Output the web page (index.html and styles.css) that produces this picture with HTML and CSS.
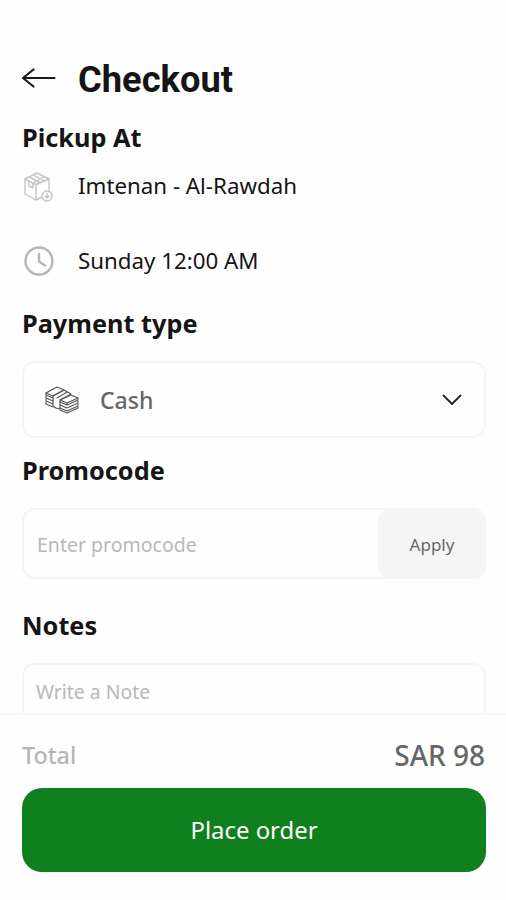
FILE: index.html
```
<!DOCTYPE html>
<html lang="en">
<head>
    <meta charset="UTF-8">
    <meta name="viewport" content="width=device-width, initial-scale=1.0">
    <title>Checkout</title>
    <link rel="stylesheet" href="styles.css">
</head>
<body>
    <main class="content">
        <header class="header">
            <svg class="back-icon" width="34" height="24" viewBox="0 0 34 24">
                <path d="M32.500 12H1M11.500 3.500L1 12l10.500 8.500"/>
            </svg>
            <h1>Checkout</h1>
        </header>

        <!-- Pickup -->
        <h2>Pickup At</h2>
        <div class="info-row">
            <svg class="info-icon box-icon" width="32" height="36" viewBox="0 -4 32 36">
                <path d="M2 8L14 2l12 6v11M2 8v15l11 6 6-3M2 8l11 5.500L26 8M13 13.500V29M6 6l11 5.500M10 4l11 6M6 10v5l4 2v-5l11-6"/>
                <circle cx="24" cy="25" r="5"/>
                <path d="M24 22.500v3M22 25l2 2 2-2"/>
            </svg>
            <span>Imtenan - Al-Rawdah</span>
        </div>
        <div class="info-row time-row">
            <svg class="info-icon clock-icon" width="32" height="34" viewBox="0 -2 32 34">
                <circle cx="16" cy="16" r="13.500"/>
                <path d="M16 9v7.500l6 4"/>
            </svg>
            <span>Sunday 12:00 AM</span>
        </div>

        <!-- Payment -->
        <h2>Payment type</h2>
        <div class="select-box">
            <svg class="cash-icon" width="34" height="30" viewBox="0 0 34 30">
                <path d="M1 8l11-6 7 3L8 11zM15 15l11-5 7 3-11 5z"/>
                <path d="M8 11l11-6 7 4-11 6v9l-4-1-3-2zM12 13l10-6"/>
                <path d="M1 8v2l7 3M1 11v2l7 3M1 14v2l7 3M1 17v2l7 3"/>
                <path d="M33 13v2l-11 5-7-3M33 16v2l-11 5-7-3M33 19v2l-11 5-7-3M33 22v1l-11 5-7-3M22 18v2"/>
            </svg>
            <span class="select-label">Cash</span>
            <svg class="chevron-icon" width="20" height="12" viewBox="0 0 20 12">
                <path d="M1.500 1.500l8.500 8.500 8.500-8.500"/>
            </svg>
        </div>

        <!-- Promocode -->
        <h2 class="promo-title">Promocode</h2>
        <div class="promo-box">
            <input type="text" class="promo-input" placeholder="Enter promocode">
            <button class="apply-btn">Apply</button>
        </div>

        <!-- Notes -->
        <h2 class="notes-title">Notes</h2>
        <textarea class="notes-input" placeholder="Write a Note"></textarea>
    </main>

    <footer class="footer">
        <div class="total-row">
            <span class="total-label">Total</span>
            <span class="total-value">SAR 98</span>
        </div>
        <button class="order-btn">Place order</button>
    </footer>
</body>
</html>
```
FILE: styles.css
```
* {
    box-sizing: border-box;
}
body {
    margin: 0;
    height: 900px;
    display: flex;
    flex-direction: column;
    font-family: 'Noto Sans', sans-serif;
    background: #fefefe;
    color: #151515;
    overflow: hidden;
}
.content {
    height: 713px;
    padding: 48px 20px 0 22px;
    overflow: hidden;
}
svg {
    fill: none;
    flex-shrink: 0;
    stroke-linecap: round;
    stroke-linejoin: round;
}
.header {
    display: flex;
    align-items: center;
    gap: 22px;
    height: 60px;
}
.back-icon {
    stroke: #1a1a1a;
    stroke-width: 2.2;
}
h1 {
    margin: 0;
    padding-top: 3px;
    font-family: Roboto, sans-serif;
    font-size: 36.3px;
    font-weight: 700;
    line-height: 60px;
}
h2 {
    margin: 11px 0 0;
    font-size: 25.3px;
    font-weight: 700;
    line-height: 36px;
}
.info-row {
    display: flex;
    align-items: center;
    gap: 23px;
    height: 40px;
    margin-top: 10px;
    padding-left: 1px;
    font-size: 22.3px;
}
.time-row {
    margin: 35px 0 25px;
}
.info-icon {
    stroke: #b5b5b5;
}
.box-icon {
    stroke: #c4c4c4;
    stroke-width: 1.4;
}
.clock-icon {
    stroke-width: 2.4;
}
.select-box {
    display: flex;
    align-items: center;
    height: 77px;
    margin-top: 20px;
    padding: 0 22px 0 21px;
    border: 2px solid #f5f5f5;
    border-radius: 13px;
}
.cash-icon {
    stroke: #555;
    stroke-width: 1.1;
}
.select-label {
    flex: 1;
    margin-left: 21px;
    font-size: 23px;
    font-weight: 500;
    color: #666;
}
.chevron-icon {
    stroke: #222;
    stroke-width: 1.8;
}
.promo-title {
    margin-top: 14px;
}
.promo-box {
    display: flex;
    height: 71px;
    margin-top: 20px;
    border: 2px solid #f5f5f5;
    border-radius: 13px;
}
input, textarea, button {
    border: none;
    outline: none;
    font-family: inherit;
}
::placeholder {
    color: #b8b8b8;
}
.promo-input {
    flex: 1;
    min-width: 0;
    padding: 2px 0 0 13px;
    font-size: 19.5px;
    background: transparent;
}
.apply-btn {
    width: 108px;
    margin: -2px;
    padding: 1px 0 0;
    border-radius: 13px;
    background: #f5f5f5;
    font-size: 17px;
    color: #666;
}
.notes-title {
    margin-top: 28px;
}
.notes-input {
    display: block;
    width: 100%;
    height: 120px;
    margin-top: 20px;
    padding: 13px 12px;
    border: 2px solid #f5f5f5;
    border-radius: 13px;
    background: transparent;
    font-size: 19.4px;
    resize: none;
}
.footer {
    height: 187px;
    padding: 14px 20px 0 22px;
    border-top: 2px solid #f9f9f9;
}
.total-row {
    display: flex;
    justify-content: space-between;
    align-items: center;
    height: 52px;
    margin-bottom: 7px;
}
.total-label {
    font-size: 23.3px;
    font-weight: 500;
    color: #b5b5b5;
}
.total-value {
    margin-right: 1px;
    font-size: 28px;
    font-weight: 500;
    color: #666;
}
.order-btn {
    display: block;
    width: 100%;
    height: 84px;
    padding: 0 0 2px;
    border-radius: 20px;
    background: #107f1d;
    font-size: 23.9px;
    color: #fff;
}
```
